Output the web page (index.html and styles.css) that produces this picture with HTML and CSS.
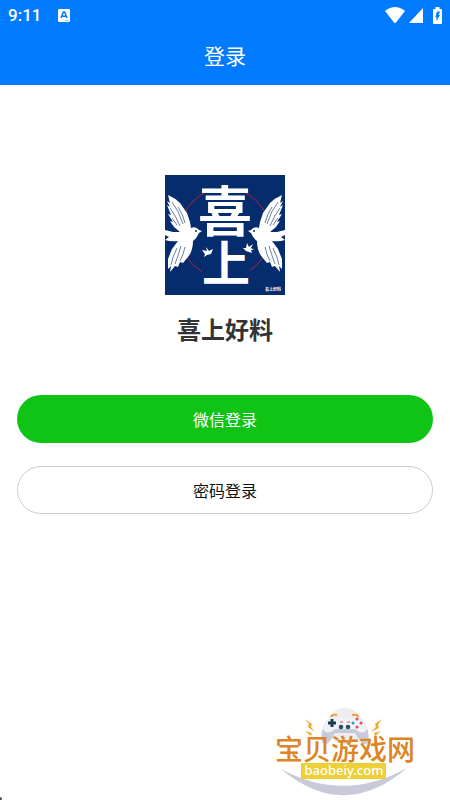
FILE: index.html
```html
<!DOCTYPE html>
<html lang="zh-CN">
<head>
    <meta charset="UTF-8">
    <meta name="viewport" content="width=device-width, initial-scale=1.0">
    <title>登录</title>
    <link rel="stylesheet" href="styles.css">
</head>
<body>
    <header class="header">
        <div class="status-bar">
            <span class="time">9:11</span>
            <svg class="app-icon" viewBox="0 0 12 13" width="12" height="13">
                <rect width="12" height="13" rx="1" fill="#fff"/>
                <path d="M3 9 5.400 3h1.200L9 9M4.200 7.200h3.600" fill="none" stroke="#007aff" stroke-width="1.500"/>
                <path d="M7 11.400h4" stroke="#8fc3ff"/>
            </svg>
            <div class="status-icons">
                <svg viewBox="0 0 20 16" width="20" height="16">
                    <path d="M0 4Q10 -4 20 4L11 15.500Q10 16.500 9 15.500Z" fill="#fff"/>
                </svg>
                <svg viewBox="0 0 14 15" width="14" height="15">
                    <path d="M14 0V15H0Z" fill="#fff"/>
                </svg>
                <svg class="battery" viewBox="0 0 9 17" width="9" height="17">
                    <path d="M2.500 0h4v2H8q1 0 1 1v13q0 1-1 1H1q-1 0-1-1V3q0-1 1-1h1.500Z" fill="#fff"/>
                    <path d="M4 4.500H7L5.600 8H7L3.500 14V10H2.300Z" fill="#007aff"/>
                </svg>
            </div>
        </div>
        <h1 class="title">登录</h1>
    </header>

    <main class="login">
        <svg class="logo" viewBox="0 0 120 120" width="120" height="120" role="img" aria-label="喜上">
            <defs>
                <g id="bird">
                    <path d="M0 55 8 57 15 57 9 52 5 46 8 47 3 39 6 40 2 30 5 32 2 26 5 28 3 20Q10 23 15 28L22 38 25 47 26 53Q31 51 34 55L37 56 34 58Q32 63 28 66 28 76 23 82L18 88 15 87 13 92 10 91 5 97 6 91 3 94 3 84 7 74 13 66Q6 67 0 65L4 62 0 60Z" fill="#fff"/>
                    <path d="M7 27Q14 36 18 49M5 33Q11 41 15 51M13 32Q18 39 20 48M7 43l5 7M12 73Q7 83 6 90M16 71Q13 81 10 89M20 72Q18 81 15 86" fill="none" stroke="#052c6c" stroke-width=".600"/>
                    <circle cx="31" cy="56" r="1" fill="#052c6c"/>
                </g>
            </defs>
            <rect width="120" height="120" fill="#052c6c"/>
            <circle cx="60" cy="58" r="45" fill="none" stroke="#b0203f" stroke-width="1"/>
            <path d="M45 6h31v15H45zM37 94h48v20H37z" fill="#052c6c"/>
            <use href="#bird"/>
            <use href="#bird" transform="translate(120 0) scale(-1 1)"/>
            <path d="M37 75l5 1-1-4 3 4 4-2-2 5-4 1-3 2 1-3ZM88 69l-4 3-2-4-1 5-3 0 3 3 6 2-1-3 3 0-3-2Z" fill="#fff"/>
            <text class="logo-text" x="60" y="57">喜</text>
            <text class="logo-text logo-text-low" x="61" y="106">上</text>
            <text class="logo-note" x="108" y="116">喜上好料</text>
        </svg>
        <h2 class="app-name">喜上好料</h2>
        <div class="actions">
            <button class="btn btn-wechat" type="button">微信登录</button>
            <button class="btn btn-password" type="button">密码登录</button>
        </div>
    </main>

    <footer class="footer">
        <svg viewBox="0 0 144 92" width="144" height="92" role="img" aria-label="宝贝游戏网 baobeiy.com">
            <circle cx="70" cy="22" r="18" fill="#eeeef0"/>
            <path d="M56 13q1-3 6-2M77 11q6-1 6 2" fill="none" stroke="#e8a13c" stroke-width="2"/>
            <path d="M54 14Q58 12 63 14H76Q81 12 86 14 90 17 93 27 95 38 91 40 87 41 83 34L80 29H60L57 34Q53 41 49 40 45 38 47 27 50 17 54 14Z" fill="#c9cad9"/>
            <path d="M54 14Q58 12 63 14H76Q81 12 86 14 90 17 92 25 88 32 80 25H60Q52 32 48 25 50 17 54 14Z" fill="#f1f1f8"/>
            <path d="M53 19h8M57 15v8" stroke="#17404f" stroke-width="3"/>
            <circle cx="66" cy="23" r="2.300" fill="#285361"/>
            <circle cx="73" cy="23" r="2.300" fill="#285361"/>
            <path d="M65 18h3M72 18h3" stroke="#e34c53"/>
            <circle cx="82" cy="15" r="1.500" fill="#e34c53"/>
            <circle cx="82" cy="23" r="1.500" fill="#e34c53"/>
            <circle cx="78" cy="19" r="1.500" fill="#329cbc"/>
            <circle cx="86" cy="19" r="1.500" fill="#e34c53"/>
            <path d="M30 15l7 5-1 3 4 5-7-5 1-3ZM107 15l-7 5 1 3-5 5 8-4-1-3ZM30 27l7 2-1 3ZM106 27l-7 2 1 3Z" fill="#efaa32"/>
            <path d="M6 65Q69 99 132 64 69 118 6 65Z" fill="#c9cad9"/>
            <rect x="26" y="59" width="85" height="16" fill="#ecd038"/>
            <text class="site-name" x="70" y="56">宝贝游戏网</text>
            <text class="site-url" x="69" y="71">baobeiy.com</text>
        </svg>
    </footer>
    <span class="corner"></span>
</body>
</html>
```

FILE: styles.css
```css
* {
    box-sizing: border-box;
}
body {
    margin: 0;
    min-height: 100vh;
    display: flex;
    flex-direction: column;
    background-color: #fff;
    font-family: Roboto, "Noto Sans CJK SC", sans-serif;
}
svg {
    display: block;
}
.header {
    height: 85px;
    background-color: #007aff;
    color: #fff;
}
.status-bar {
    display: flex;
    align-items: center;
    height: 30px;
    padding: 0 8px;
}
.time {
    font-size: 17px;
    font-weight: 500;
    line-height: 30px;
}
.app-icon {
    margin-left: 17px;
}
.status-icons {
    display: flex;
    align-items: center;
    gap: 4px;
    margin-left: auto;
}
.battery {
    margin-left: 6px;
}
.title {
    margin: 0;
    font-size: 21px;
    font-weight: 400;
    line-height: 54px;
    text-align: center;
}
.login {
    padding: 90px 17px 0;
}
.logo {
    margin: 0 auto;
}
.logo-text {
    fill: #fff;
    font-size: 54px;
    font-weight: 700;
    text-anchor: middle;
}
.logo-text-low {
    font-size: 48px;
}
.logo-note {
    fill: #fff;
    font-size: 4px;
    font-weight: 700;
    text-anchor: middle;
}
.app-name {
    margin: 16px 0 44px;
    color: #333;
    font-size: 24px;
    font-weight: 700;
    line-height: 40px;
    text-align: center;
}
.actions {
    display: flex;
    flex-direction: column;
    gap: 23px;
}
.btn {
    height: 48px;
    border: none;
    border-radius: 24px;
    font-family: inherit;
    font-size: 16px;
    cursor: pointer;
}
.btn-wechat {
    background-color: #10c416;
    color: #fff;
}
.btn-password {
    border: 1px solid #ccc;
    background-color: #fff;
    color: #111;
}
.footer {
    display: flex;
    justify-content: flex-end;
    margin-top: auto;
    padding: 0 31px 4px 0;
}
.site-name {
    fill: #dd8423;
    font-size: 28px;
    font-weight: 500;
    text-anchor: middle;
}
.site-url {
    fill: #fff;
    font-family: "Noto Sans", sans-serif;
    font-size: 13px;
    font-weight: 500;
    text-anchor: middle;
}
.corner {
    position: absolute;
    left: 0;
    bottom: 0;
    width: 2px;
    height: 3px;
    border-top-right-radius: 2px;
    background-color: #555;
}
```
